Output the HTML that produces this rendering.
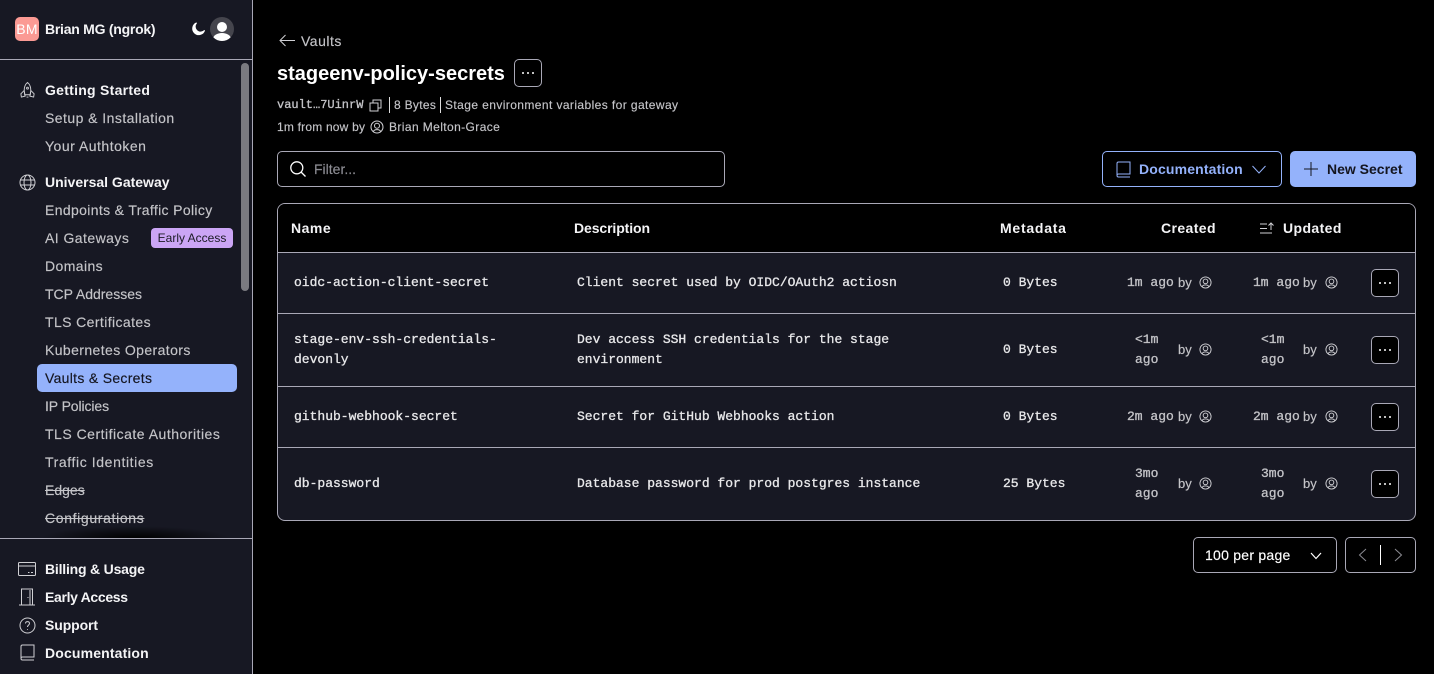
<!DOCTYPE html>
<html><head><meta charset="utf-8"><style>
*{box-sizing:border-box}
html,body{margin:0;padding:0;width:1434px;height:674px;overflow:hidden;background:#000;font-family:"Liberation Sans",sans-serif;color:#fff}
.t{position:absolute;white-space:nowrap;font-size:14px;line-height:20px}
.m{font-family:"Liberation Mono",monospace;font-size:13px;line-height:20px;position:absolute;white-space:nowrap;color:#e8e8ea;-webkit-text-stroke:.3px currentColor}
.d{color:#c4c4c8}
.y{font-family:"Liberation Sans",sans-serif;font-size:13px;-webkit-text-stroke:.15px currentColor;color:#c4c4c8}
.g{color:#c4c4c8;-webkit-text-stroke:.15px currentColor}
.b{font-weight:bold;color:#f4f4f6}
.box{position:absolute}
svg{position:absolute;fill:none;stroke:#d0d0d4;stroke-width:1}
.dots{position:absolute;width:28px;height:28px;border:1px solid #a9a8b6;border-radius:5px;background:#000}
.dots i{position:absolute;top:12px;width:2px;height:2px;background:#fff;border-radius:50%}
.dots i:nth-child(1){left:7px}.dots i:nth-child(2){left:12px}.dots i:nth-child(3){left:17px}
.hl{position:absolute;left:278px;width:1137px;height:1px;background:#a9a8b6}
</style></head><body>
<div class="box" style="left:0;top:0;width:253px;height:674px;background:#171823;border-right:1px solid #a9a8b6"></div>
<div class="box" style="left:0;top:59px;width:252px;height:1px;background:#a9a8b6"></div>
<div class="box" style="left:15px;top:17px;width:24px;height:24px;background:#fb9a94;border-radius:5px;color:#fff;font-size:14px;line-height:24px;text-align:center;letter-spacing:.3px">BM</div>
<div class="t b" style="left:45px;top:19px;letter-spacing:-.25px">Brian MG (ngrok)</div>
<svg style="left:191px;top:21px" width="15" height="15" viewBox="0 0 16 16"><path d="M6 2A6.500 6.500 0 1 0 14.500 10A5.500 5.500 0 0 1 6 2Z" style="fill:#fff;stroke:#fff"/></svg>
<div class="box" style="left:210px;top:17px;width:24px;height:24px;border-radius:50%;background:#45454d;overflow:hidden"><div class="box" style="left:7px;top:5px;width:10px;height:10px;border-radius:50%;background:#fff"></div><div class="box" style="left:3px;top:16px;width:18px;height:12px;border-radius:50%;background:#fff"></div></div>
<div class="box" style="left:241px;top:63px;width:8px;height:228px;border-radius:4px;background:#7a7a80"></div>

<svg style="left:19px;top:81px" width="17" height="18" viewBox="0 0 18 18"><path d="M9 1C5.500 4 5 8 6 14H12C13 8 12.500 4 9 1ZM5.500 9.500L2 13L2.500 16.500L6.500 15.500ZM12.500 9.500L16 13L15.500 16.500L11.500 15.500ZM8 16.500H10"/><circle cx="9" cy="7" r="1"/></svg>
<div class="t b" style="left:45px;top:80px;letter-spacing:.27px">Getting Started</div>
<div class="t g" style="left:45px;top:108px;letter-spacing:.45px">Setup &amp; Installation</div>
<div class="t g" style="left:45px;top:136px;letter-spacing:.5px">Your Authtoken</div>
<svg style="left:19px;top:174px" width="17" height="17" viewBox="0 0 17 17"><circle cx="8.500" cy="8.500" r="7.500"/><ellipse cx="8.500" cy="8.500" rx="3.500" ry="7.500"/><path d="M1.500 6H15.500M1.500 11H15.500"/></svg>
<div class="t b" style="left:45px;top:172px">Universal Gateway</div>
<div class="t g" style="left:45px;top:200px;letter-spacing:.35px">Endpoints &amp; Traffic Policy</div>
<div class="t g" style="left:45px;top:228px;letter-spacing:.45px">AI Gateways</div>
<div class="box" style="left:151px;top:228px;width:82px;height:20px;border-radius:4px;background:#cba5f5;color:#1a1a24;font-size:12px;line-height:20px;text-align:center">Early Access</div>
<div class="t g" style="left:45px;top:256px;letter-spacing:.4px">Domains</div>
<div class="t g" style="left:45px;top:284px">TCP Addresses</div>
<div class="t g" style="left:45px;top:312px;letter-spacing:.4px">TLS Certificates</div>
<div class="t g" style="left:45px;top:340px;letter-spacing:.4px">Kubernetes Operators</div>
<div class="box" style="left:37px;top:364px;width:200px;height:28px;border-radius:5px;background:#94b2fb"></div>
<div class="t" style="left:45px;top:368px;color:#14151f;letter-spacing:.3px;-webkit-text-stroke:.15px currentColor">Vaults &amp; Secrets</div>
<div class="t g" style="left:45px;top:396px;letter-spacing:-.1px">IP Policies</div>
<div class="t g" style="left:45px;top:424px;letter-spacing:.5px">TLS Certificate Authorities</div>
<div class="t g" style="left:45px;top:452px;letter-spacing:.6px">Traffic Identities</div>
<div class="t g" style="left:45px;top:480px;text-decoration:line-through">Edges</div>
<div class="t g" style="left:45px;top:508px;text-decoration:line-through;letter-spacing:.65px">Configurations</div>
<div class="box" style="left:40px;top:526px;width:190px;height:12px;background:radial-gradient(ellipse at 50% 100%,#000 0,rgba(0,0,0,0) 70%)"></div>
<div class="box" style="left:0;top:538px;width:252px;height:1px;background:#a9a8b6"></div>

<svg style="left:18px;top:561px" width="18" height="16" viewBox="0 0 18 16"><rect x=".5" y="1.500" width="17" height="13" rx="1"/><path d="M.5 5H17.500M10 11.500H11.500M13 11.500H15"/></svg>
<div class="t b" style="left:45px;top:559px;letter-spacing:-.2px">Billing &amp; Usage</div>
<svg style="left:18px;top:588px" width="18" height="18" viewBox="0 0 18 18"><path d="M1 17H17M3.500 17V1H14.500V17M12 2V17"/><path d="M9.500 9.500H10.500"/></svg>
<div class="t b" style="left:45px;top:587px;letter-spacing:-.33px">Early Access</div>
<svg style="left:19px;top:617px" width="17" height="17" viewBox="0 0 17 17"><circle cx="8.500" cy="8.500" r="7.500"/><path d="M6.500 6.500C6.500 4 10.500 4 10.500 6.500C10.500 8 8.500 8 8.500 10M8.500 12V12.800"/></svg>
<div class="t b" style="left:45px;top:615px;letter-spacing:-.1px">Support</div>
<svg style="left:20px;top:644px" width="15" height="17" viewBox="0 0 15 17"><path d="M1 14V2.500C1 1.500 1.500 1 2.500 1H14V13H2.500C1.500 13 1 13.500 1 14.500C1 15.500 1.500 16 2.500 16H14"/></svg>
<div class="t b" style="left:45px;top:643px;letter-spacing:.15px">Documentation</div>

<svg style="left:279px;top:34px" width="16" height="13" viewBox="0 0 16 13"><path d="M16 6.500H1M6.500 1L1 6.500L6.500 12"/></svg>
<div class="t g" style="left:301px;top:31px;letter-spacing:.5px">Vaults</div>
<div class="t" style="left:277px;top:61px;font-size:20px;line-height:26px;font-weight:bold">stageenv-policy-secrets</div>
<div class="dots" style="left:514px;top:59px"><i></i><i></i><i></i></div>
<div class="m" style="left:277px;top:95px;font-size:12px;color:#c4c4c8">vault…7UinrW</div>
<svg style="left:369px;top:99px" width="13" height="13" viewBox="0 0 13 13"><rect x="4" y="1" width="8" height="8"/><rect x="1" y="4" width="8" height="8" fill="#000"/></svg>
<div class="box" style="left:389px;top:97px;width:1px;height:16px;background:#ddd"></div>
<div class="t g" style="left:394px;top:95px;font-size:12px;letter-spacing:.3px">8 Bytes</div>
<div class="box" style="left:440px;top:97px;width:1px;height:16px;background:#ddd"></div>
<div class="t g" style="left:445px;top:95px;font-size:12px;letter-spacing:.41px">Stage environment variables for gateway</div>
<div class="t g" style="left:277px;top:117px;font-size:12px;letter-spacing:.2px">1m from now by</div>
<svg style="left:370px;top:120px" width="14" height="14" viewBox="0 0 14 14"><circle cx="7" cy="7" r="6"/><circle cx="7" cy="5.800" r="2.500"/><path d="M3.500 11.500C4 9 10 9 10.500 11.500"/></svg>
<div class="t g" style="left:389px;top:117px;font-size:12px;letter-spacing:.4px">Brian Melton-Grace</div>

<div class="box" style="left:277px;top:151px;width:448px;height:36px;border:1px solid #a9a8b6;border-radius:5px"></div>
<svg style="left:290px;top:161px;stroke:#fff;stroke-width:1.300" width="16" height="16" viewBox="0 0 16 16"><circle cx="6.800" cy="6.800" r="6"/><path d="M11 11L15.500 15.500"/></svg>
<div class="t" style="left:314px;top:159px;color:#8b8b92;-webkit-text-stroke:.15px currentColor">Filter...</div>

<div class="box" style="left:1102px;top:151px;width:180px;height:36px;border:1px solid #94b2fb;border-radius:5px"></div>
<svg style="left:1116px;top:161px;stroke:#94b2fb" width="15" height="17" viewBox="0 0 15 17"><path d="M1 14V2.500C1 1.500 1.500 1 2.500 1H14V13H2.500C1.500 13 1 13.500 1 14.500C1 15.500 1.500 16 2.500 16H14"/></svg>
<div class="t" style="left:1139px;top:159px;color:#94b2fb;font-weight:bold;letter-spacing:.15px">Documentation</div>
<svg style="left:1252px;top:165px;stroke:#94b2fb" width="14" height="9" viewBox="0 0 14 9"><path d="M.5 1L7 8L13.500 1"/></svg>
<div class="box" style="left:1290px;top:151px;width:126px;height:36px;border-radius:5px;background:#94b2fb"></div>
<svg style="left:1304px;top:162px;stroke:#14151f" width="14" height="14" viewBox="0 0 14 14"><path d="M7 0V14M0 7H14"/></svg>
<div class="t" style="left:1327px;top:159px;color:#14151f;font-weight:bold">New Secret</div>

<div class="box" style="left:277px;top:203px;width:1139px;height:318px;border:1px solid #a9a8b6;border-radius:8px;overflow:hidden;background:#171823"><div class="box" style="left:0;top:0;width:1137px;height:48px;background:#000"></div></div>
<div class="hl" style="top:252px"></div><div class="hl" style="top:313px"></div><div class="hl" style="top:386px"></div><div class="hl" style="top:447px"></div>
<div class="t b" style="left:291px;top:218px;letter-spacing:.5px">Name</div>
<div class="t b" style="left:574px;top:218px;letter-spacing:-.1px">Description</div>
<div class="t b" style="left:1000px;top:218px;letter-spacing:.75px">Metadata</div>
<div class="t b" style="left:1161px;top:218px;letter-spacing:.4px">Created</div>
<svg style="left:1260px;top:222px" width="15" height="12" viewBox="0 0 15 12"><path d="M0 2H7M0 6.500H7M0 11H12M11 8V1M8.500 3.500L11 1L13.500 3.500"/></svg>
<div class="t b" style="left:1283px;top:218px;letter-spacing:.4px">Updated</div>

<div class="m" style="left:294px;top:273px">oidc-action-client-secret</div>
<div class="m" style="left:577px;top:273px">Client secret used by OIDC/OAuth2 actiosn</div>
<div class="m" style="left:1003px;top:273px">0 Bytes</div>
<div class="m d" style="left:1127px;top:273px">1m ago</div><div class="m y" style="left:1178px;top:273px">by</div>
<div class="m d" style="left:1253px;top:273px">1m ago</div><div class="m y" style="left:1303px;top:273px">by</div>
<svg style="left:1199px;top:276px" width="13" height="13" viewBox="0 0 14 14"><circle cx="7" cy="7" r="6"/><circle cx="7" cy="5.800" r="2.500"/><path d="M3.500 11.500C4 9 10 9 10.500 11.500"/></svg>
<svg style="left:1325px;top:276px" width="13" height="13" viewBox="0 0 14 14"><circle cx="7" cy="7" r="6"/><circle cx="7" cy="5.800" r="2.500"/><path d="M3.500 11.500C4 9 10 9 10.500 11.500"/></svg>
<div class="dots" style="left:1371px;top:269px"><i></i><i></i><i></i></div>

<div class="m" style="left:294px;top:330px">stage-env-ssh-credentials-<br>devonly</div>
<div class="m" style="left:577px;top:330px">Dev access SSH credentials for the stage<br>environment</div>
<div class="m" style="left:1003px;top:340px">0 Bytes</div>
<div class="m d" style="left:1135px;top:330px">&lt;1m<br>ago</div><div class="m y" style="left:1178px;top:340px">by</div>
<div class="m d" style="left:1261px;top:330px">&lt;1m<br>ago</div><div class="m y" style="left:1303px;top:340px">by</div>
<svg style="left:1199px;top:343px" width="13" height="13" viewBox="0 0 14 14"><circle cx="7" cy="7" r="6"/><circle cx="7" cy="5.800" r="2.500"/><path d="M3.500 11.500C4 9 10 9 10.500 11.500"/></svg>
<svg style="left:1325px;top:343px" width="13" height="13" viewBox="0 0 14 14"><circle cx="7" cy="7" r="6"/><circle cx="7" cy="5.800" r="2.500"/><path d="M3.500 11.500C4 9 10 9 10.500 11.500"/></svg>
<div class="dots" style="left:1371px;top:336px"><i></i><i></i><i></i></div>

<div class="m" style="left:294px;top:407px">github-webhook-secret</div>
<div class="m" style="left:577px;top:407px">Secret for GitHub Webhooks action</div>
<div class="m" style="left:1003px;top:407px">0 Bytes</div>
<div class="m d" style="left:1127px;top:407px">2m ago</div><div class="m y" style="left:1178px;top:407px">by</div>
<div class="m d" style="left:1253px;top:407px">2m ago</div><div class="m y" style="left:1303px;top:407px">by</div>
<svg style="left:1199px;top:410px" width="13" height="13" viewBox="0 0 14 14"><circle cx="7" cy="7" r="6"/><circle cx="7" cy="5.800" r="2.500"/><path d="M3.500 11.500C4 9 10 9 10.500 11.500"/></svg>
<svg style="left:1325px;top:410px" width="13" height="13" viewBox="0 0 14 14"><circle cx="7" cy="7" r="6"/><circle cx="7" cy="5.800" r="2.500"/><path d="M3.500 11.500C4 9 10 9 10.500 11.500"/></svg>
<div class="dots" style="left:1371px;top:403px"><i></i><i></i><i></i></div>

<div class="m" style="left:294px;top:474px">db-password</div>
<div class="m" style="left:577px;top:474px">Database password for prod postgres instance</div>
<div class="m" style="left:1003px;top:474px">25 Bytes</div>
<div class="m d" style="left:1135px;top:464px">3mo<br>ago</div><div class="m y" style="left:1178px;top:474px">by</div>
<div class="m d" style="left:1261px;top:464px">3mo<br>ago</div><div class="m y" style="left:1303px;top:474px">by</div>
<svg style="left:1199px;top:477px" width="13" height="13" viewBox="0 0 14 14"><circle cx="7" cy="7" r="6"/><circle cx="7" cy="5.800" r="2.500"/><path d="M3.500 11.500C4 9 10 9 10.500 11.500"/></svg>
<svg style="left:1325px;top:477px" width="13" height="13" viewBox="0 0 14 14"><circle cx="7" cy="7" r="6"/><circle cx="7" cy="5.800" r="2.500"/><path d="M3.500 11.500C4 9 10 9 10.500 11.500"/></svg>
<div class="dots" style="left:1371px;top:470px"><i></i><i></i><i></i></div>

<div class="box" style="left:1193px;top:537px;width:144px;height:36px;border:1px solid #a9a8b6;border-radius:5px"></div>
<div class="t" style="left:1205px;top:545px;letter-spacing:.25px;-webkit-text-stroke:.15px currentColor">100 per page</div>
<svg style="left:1310px;top:552px;stroke:#fff;stroke-width:1.200" width="12" height="8" viewBox="0 0 12 8"><path d="M1 1L6 6.500L11 1"/></svg>
<div class="box" style="left:1345px;top:537px;width:71px;height:36px;border:1px solid #a9a8b6;border-radius:5px"></div>
<svg style="left:1358px;top:548px;stroke:#8b8b92" width="9" height="14" viewBox="0 0 9 14"><path d="M8 1L1.500 7L8 13"/></svg>
<div class="box" style="left:1380px;top:545px;width:1px;height:20px;background:#fff"></div>
<svg style="left:1394px;top:548px;stroke:#8b8b92" width="9" height="14" viewBox="0 0 9 14"><path d="M1 1L7.500 7L1 13"/></svg>
</body></html>
